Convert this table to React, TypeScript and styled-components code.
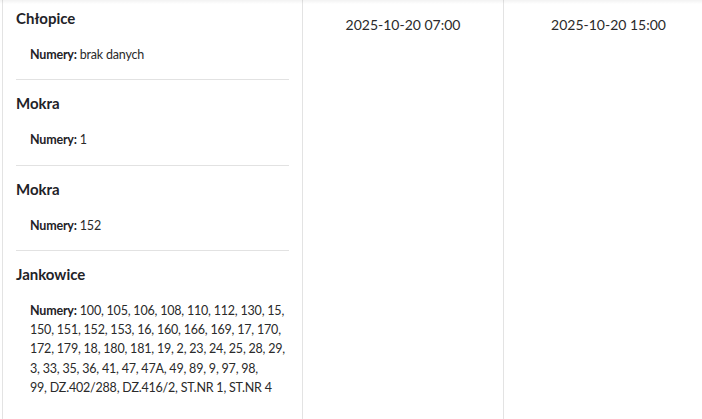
import React from 'react';
import styled, { createGlobalStyle } from 'styled-components';

const GlobalStyle = createGlobalStyle`
  html, body {
    margin: 0;
    padding: 0;
    background: #ffffff;
    font-family: Lato, "Open Sans", "Liberation Sans", sans-serif;
    color: #212529;
  }
`;

const Page = styled.div`
  position: relative;
  width: 702px;
  height: 419px;
  overflow: hidden;
  padding-left: 2px;
  box-sizing: border-box;
  background: #fff;

  &::before {
    content: '';
    position: absolute;
    top: 0;
    left: 0;
    right: 0;
    height: 4px;
    background: linear-gradient(to bottom, rgba(0, 0, 0, 0.05), rgba(0, 0, 0, 0));
    pointer-events: none;
  }
`;

const Table = styled.div`
  display: grid;
  grid-template-columns: 300px 201px 210px;
  min-height: 419px;
`;

const Cell = styled.div<{ $center?: boolean }>`
  border-left: 1px solid #e3e3e3;
  box-sizing: border-box;
  padding: ${(p) => (p.$center ? '15px 8px' : '0 13px')};
  text-align: ${(p) => (p.$center ? 'center' : 'left')};
`;

const Place = styled.div`
  padding: 13px 0 15px;
  border-bottom: 1px solid #e2e2e2;

  &:first-child {
    padding-top: 8px;
  }

  &:last-child {
    border-bottom: none;
  }
`;

const PlaceName = styled.div`
  font-size: 15px;
  font-weight: 700;
  line-height: 20px;
  color: #1f2328;
`;

const Numbers = styled.div`
  margin-top: 17px;
  padding: 0 0 0 14px;
  font-size: 12.5px;
  letter-spacing: -0.2px;
  line-height: 19.3px;
  color: #2a2a2a;

  b {
    font-weight: 700;
    color: #1f2328;
  }
`;

const DateText = styled.div`
  font-size: 14px;
  line-height: 20px;
  color: #2a2a2a;
`;

const places = [
  { name: 'Chłopice', numbers: 'brak danych' },
  { name: 'Mokra', numbers: '1' },
  { name: 'Mokra', numbers: '152' },
  {
    name: 'Jankowice',
    numbers:
      '100, 105, 106, 108, 110, 112, 130, 15, 150, 151, 152, 153, 16, 160, 166, 169, 17, 170, 172, 179, 18, 180, 181, 19, 2, 23, 24, 25, 28, 29, 3, 33, 35, 36, 41, 47, 47A, 49, 89, 9, 97, 98, 99,\u00a0DZ.402/288, DZ.416/2, ST.NR 1, ST.NR 4',
  },
];

export default function App() {
  return (
    <Page>
      <GlobalStyle />
      <Table>
        <Cell>
          {places.map((p, i) => (
            <Place key={i}>
              <PlaceName>{p.name}</PlaceName>
              <Numbers>
                <b>Numery:</b> {p.numbers}
              </Numbers>
            </Place>
          ))}
        </Cell>
        <Cell $center>
          <DateText>2025-10-20 07:00</DateText>
        </Cell>
        <Cell $center>
          <DateText>2025-10-20 15:00</DateText>
        </Cell>
      </Table>
    </Page>
  );
}
